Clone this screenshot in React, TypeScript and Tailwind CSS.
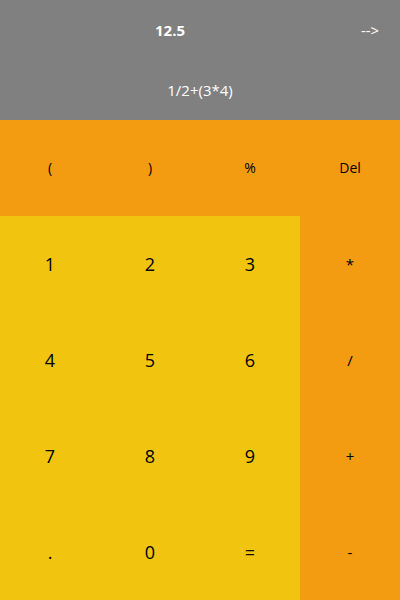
import React from "react";

const rows = [
  ["1", "2", "3", "*"],
  ["4", "5", "6", "/"],
  ["7", "8", "9", "+"],
  [".", "0", "=", "-"],
];

function App() {
  return (
    <div
      className="w-[400px] h-[600px] flex flex-col text-black"
      style={{ fontFamily: '"Open Sans", "DejaVu Sans", sans-serif' }}
    >
      <div className="h-[120px] bg-[#808080] text-white flex flex-col">
        <div className="h-[60px] flex items-center">
          <span className="w-[340px] text-center text-[15px] font-bold">12.5</span>
          <span className="w-[60px] text-center text-[15px]">--&gt;</span>
        </div>
        <div className="h-[60px] flex items-center justify-center text-[15px]">
          1/2+(3*4)
        </div>
      </div>
      <div className="h-[96px] bg-[#f39c12] grid grid-cols-4 text-sm">
        {["(", ")", "%", "Del"].map((k) => (
          <button key={k} className="flex items-center justify-center">
            {k}
          </button>
        ))}
      </div>
      <div className="flex-1 grid grid-rows-4">
        {rows.map((row, i) => (
          <div key={i} className="grid grid-cols-4">
            {row.map((k, j) => (
              <button
                key={k}
                className={
                  j === 3
                    ? "bg-[#f39c12] flex items-center justify-center text-[15px]"
                    : "bg-[#f1c40f] flex items-center justify-center text-lg"
                }
              >
                {k}
              </button>
            ))}
          </div>
        ))}
      </div>
    </div>
  );
}

export default App;
